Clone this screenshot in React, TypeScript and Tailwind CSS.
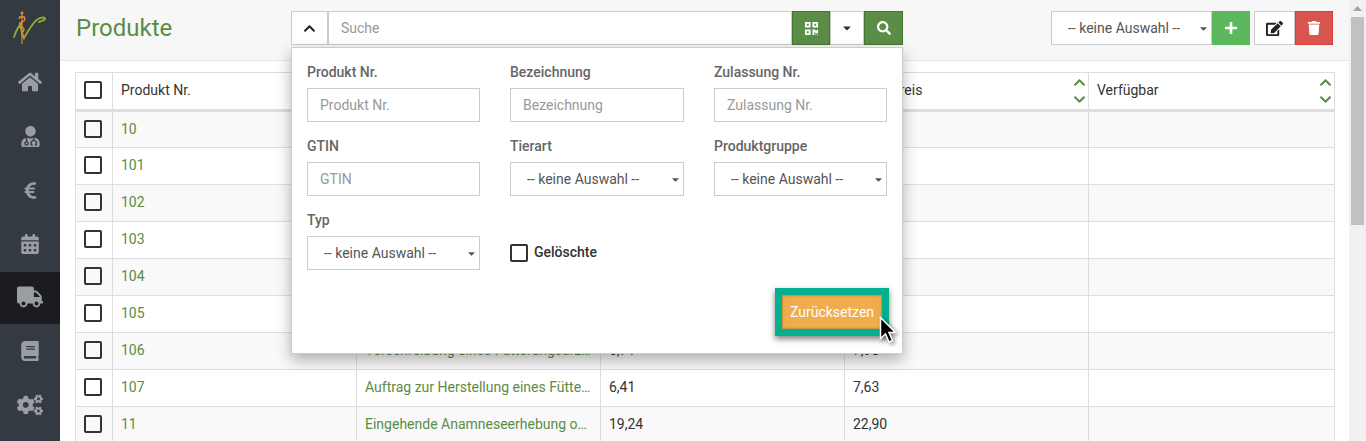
import type { ReactNode } from 'react'
import {
  FaBook,
  FaCalendarAlt,
  FaCaretDown,
  FaChevronDown,
  FaChevronUp,
  FaCogs,
  FaEdit,
  FaEuroSign,
  FaHome,
  FaPlus,
  FaQrcode,
  FaSearch,
  FaTrash,
  FaTruck,
  FaUserMd,
} from 'react-icons/fa'

const navItems = [
  { icon: FaHome, size: 24, box: 'h-[54px] pb-[2px]' },
  { icon: FaUserMd, size: 21, box: 'h-[54px] pb-[2px]' },
  { icon: FaEuroSign, size: 19, box: 'h-[54px] pb-[2px]' },
  { icon: FaCalendarAlt, size: 20, box: 'h-[54px] pb-[2px]' },
  { icon: FaTruck, size: 26, box: 'h-[52px] pb-[2px] bg-[#1a1c1f]' },
  { icon: FaBook, size: 20, box: 'h-[54px]' },
  { icon: FaCogs, size: 26, box: 'h-[54px]' },
]

const rows = [
  { nr: '10', name: '', net: '', gross: '' },
  { nr: '101', name: '', net: '', gross: '' },
  { nr: '102', name: '', net: '', gross: '' },
  { nr: '103', name: '', net: '', gross: '' },
  { nr: '104', name: '', net: '', gross: '' },
  { nr: '105', name: '', net: '', gross: '' },
  { nr: '106', name: 'Verschreibung eines Futterungsarzneimittels', net: '6,71', gross: '7,98' },
  { nr: '107', name: 'Auftrag zur Herstellung eines Fütterungsarzneimittels', net: '6,41', gross: '7,63' },
  { nr: '11', name: 'Eingehende Anamneseerhebung oder Beratung', net: '19,24', gross: '22,90' },
]

const Checkbox = () => <span className="block h-[18px] w-[18px] rounded-[2px] border-2 border-[#333]" />

const Logo = () => (
  <svg width="34" height="36" viewBox="0 0 34 36" fill="none">
    <path
      d="M1 27C3 21 5 17 8 14M7 13C8 20 9 24 11 28 15 21 20 12 25 9 28 7 32 7 32 9 31 11 28 11 26 12"
      stroke="#8fb02f"
      strokeWidth="1.8"
      strokeLinecap="round"
    />
    <path d="M9 2v32" stroke="#e58a3c" strokeWidth="1.2" />
    <path d="M6 7h6M6 9c0-3 6-3 6 0s-6 3-5 6 5 2 4 5-3 3-2 6" stroke="#e58a3c" strokeWidth="1.3" />
    <circle cx="9" cy="3" r="1.4" fill="#e58a3c" />
  </svg>
)

const SortableHead = ({ label }: { label: string }) => (
  <th className="border border-[#ddd] border-b-[3px] p-0 font-normal">
    <div className="flex h-[36px] items-center justify-between pl-2 pr-[2px]">
      <span className="pb-[2px]">{label}</span>
      <span className="flex h-full flex-col justify-between py-[3px] text-[#5a8d46]">
        <FaChevronUp size={13} />
        <FaChevronDown size={13} />
      </span>
    </div>
  </th>
)

const Field = ({ label, children }: { label: string; children: ReactNode }) => (
  <div>
    <div className="mb-[7px] h-[18px] text-[14px] leading-[18px] font-medium text-[#666]">{label}</div>
    {children}
  </div>
)

const TextField = ({ label }: { label: string }) => (
  <Field label={label}>
    <input
      placeholder={label}
      className="h-[34px] w-full border border-[#ccc] bg-white px-3 text-[14px] outline-none placeholder:text-[#999]"
    />
  </Field>
)

const SelectBox = ({ className }: { className: string }) => (
  <div className={`relative h-[34px] bg-white ${className}`}>
    <select className="h-full w-full appearance-none bg-transparent pl-4 text-[14px] text-[#555] outline-none">
      <option>-- keine Auswahl --</option>
    </select>
    <FaCaretDown size={11} className="pointer-events-none absolute top-[11px] right-[2px] text-[#555]" />
  </div>
)

const SelectField = ({ label }: { label: string }) => (
  <Field label={label}>
    <SelectBox className="border border-[#ccc]" />
  </Field>
)

const SearchPanel = () => (
  <div className="absolute top-[36px] left-0 z-10 h-[307px] w-[612px] border border-[#ccc] bg-white px-[15px] pt-[15px] shadow-[0_6px_14px_rgba(0,0,0,0.3)]">
    <div className="grid grid-cols-[173px_174px_173px] gap-x-[30px] gap-y-[15px]">
      <TextField label="Produkt Nr." />
      <TextField label="Bezeichnung" />
      <TextField label="Zulassung Nr." />
      <TextField label="GTIN" />
      <SelectField label="Tierart" />
      <SelectField label="Produktgruppe" />
      <SelectField label="Typ" />
      <label className="col-span-2 flex items-center gap-[6px] self-end pb-[7px] text-[14px] font-medium text-[#333]">
        <Checkbox />
        Gelöschte
      </label>
    </div>
    <div className="absolute top-[240px] left-[483px] border-[7px] border-[#05b08f] shadow-[0_3px_6px_rgba(0,0,0,0.5)]">
      <button className="block h-[34px] w-[100px] bg-[#efad4e] text-center text-[14px] text-white shadow-[inset_0_0_3px_rgba(120,70,0,0.6)]">
        Zurücksetzen
      </button>
    </div>
    <svg
      className="absolute top-[268px] left-[587px] drop-shadow-[2px_2px_2px_rgba(0,0,0,0.45)]"
      width="18"
      height="30"
      viewBox="0 0 18 30"
    >
      <path
        d="M1.5 1.5v21l5-4.5 3.500 8 3.500-1.500-3.500-8h6.500z"
        fill="#000"
        stroke="#fff"
        strokeWidth="1.500"
      />
    </svg>
  </div>
)

const Header = () => (
  <header className="flex h-[61px] shrink-0 items-start border-b border-[#e5e5e5] bg-[#f7f7f7] pt-[11px] pr-4 pl-4">
    <h1 className="w-[215px] text-[24px] leading-[34px] text-[#5a8d46]">Produkte</h1>
    <div className="relative flex h-[34px] w-[612px]">
      <button className="flex w-[38px] items-center justify-center border border-r-2 border-[#ccc] bg-white text-[#222]">
        <FaChevronUp size={13} />
      </button>
      <input
        placeholder="Suche"
        className="h-full min-w-0 flex-1 border border-l-0 border-[#ccc] bg-white px-3 text-[14px] outline-none placeholder:text-[#999]"
      />
      <button className="flex w-[38px] items-center justify-center border border-[#44752f] bg-[#5a8d46] text-white">
        <FaQrcode size={15} />
      </button>
      <button className="flex w-[34px] items-center justify-center border border-[#ccc] bg-white text-[#333]">
        <FaCaretDown size={12} />
      </button>
      <button className="flex w-[39px] items-center justify-center border border-[#44752f] bg-[#5a8d46] text-white">
        <FaSearch size={14} />
      </button>
      <SearchPanel />
    </div>
    <div className="ml-auto flex h-[34px]">
      <SelectBox className="w-[161px] border border-[#ccc]" />
      <button className="flex w-[38px] items-center justify-center bg-[#5cb85c] text-white">
        <FaPlus size={14} />
      </button>
      <button className="ml-1 flex w-[41px] items-center justify-center border border-[#ccc] bg-white text-[#222]">
        <FaEdit size={17} />
      </button>
      <button className="flex w-[38px] items-center justify-center border border-[#d43f3a] bg-[#d9534f] text-white">
        <FaTrash size={14} />
      </button>
    </div>
  </header>
)

const ProductTable = () => (
  <div className="px-[15px] pt-[11px]">
    <table className="w-[1259px] table-fixed border-collapse bg-white text-[14px] text-[#333]">
      <colgroup>
        <col className="w-[37px]" />
        <col className="w-[244px]" />
        <col className="w-[244px]" />
        <col className="w-[244px]" />
        <col className="w-[244px]" />
        <col className="w-[246px]" />
      </colgroup>
      <thead>
        <tr className="h-[38px] text-left">
          <th className="border border-[#ddd] border-b-[3px] pb-[2px] pl-2">
            <Checkbox />
          </th>
          <SortableHead label="Produkt Nr." />
          <SortableHead label="Bezeichnung" />
          <SortableHead label="Netto Preis" />
          <SortableHead label="Netto Preis" />
          <SortableHead label="Verfügbar" />
        </tr>
      </thead>
      <tbody>
        {rows.map((row, index) => (
          <tr key={row.nr} className={`h-[37px] ${index % 2 === 0 ? 'bg-[#f9f9f9]' : 'bg-white'}`}>
            <td className="border border-[#ddd] pb-[2px] pl-2">
              <Checkbox />
            </td>
            <td className="border border-[#ddd] px-2 pb-[1px] text-[#5a8d46]">{row.nr}</td>
            <td className="truncate border border-[#ddd] px-2 pb-[1px] text-[#5a8d46]">{row.name}</td>
            <td className="border border-[#ddd] px-2 pb-[1px]">{row.net}</td>
            <td className="border border-[#ddd] px-2 pb-[1px]">{row.gross}</td>
            <td className="border border-[#ddd] px-2" />
          </tr>
        ))}
      </tbody>
    </table>
  </div>
)

const App = () => (
  <div className="flex h-[441px] w-[1366px] overflow-hidden bg-white font-['Roboto',sans-serif]">
    <aside className="flex w-[60px] shrink-0 flex-col bg-[#343a42] text-[#9a9ea3]">
      <div className="flex h-[56px] items-center justify-center">
        <Logo />
      </div>
      {navItems.map(({ icon: Icon, size, box }, index) => (
        <div key={index} className={`flex items-center justify-center ${box}`}>
          <Icon size={size} />
        </div>
      ))}
    </aside>
    <main className="min-w-0 flex-1">
      <Header />
      <ProductTable />
    </main>
    <div className="flex w-[17px] shrink-0 flex-col items-center bg-[#f1f1f1]">
      <svg className="mt-[6px] mb-[6px]" width="9" height="5" viewBox="0 0 9 5">
        <path d="M4.500 0 9 5H0z" fill="#a3a3a3" />
      </svg>
      <div className="h-[208px] w-[13px] bg-[#c1c1c1]" />
    </div>
  </div>
)

export default App
